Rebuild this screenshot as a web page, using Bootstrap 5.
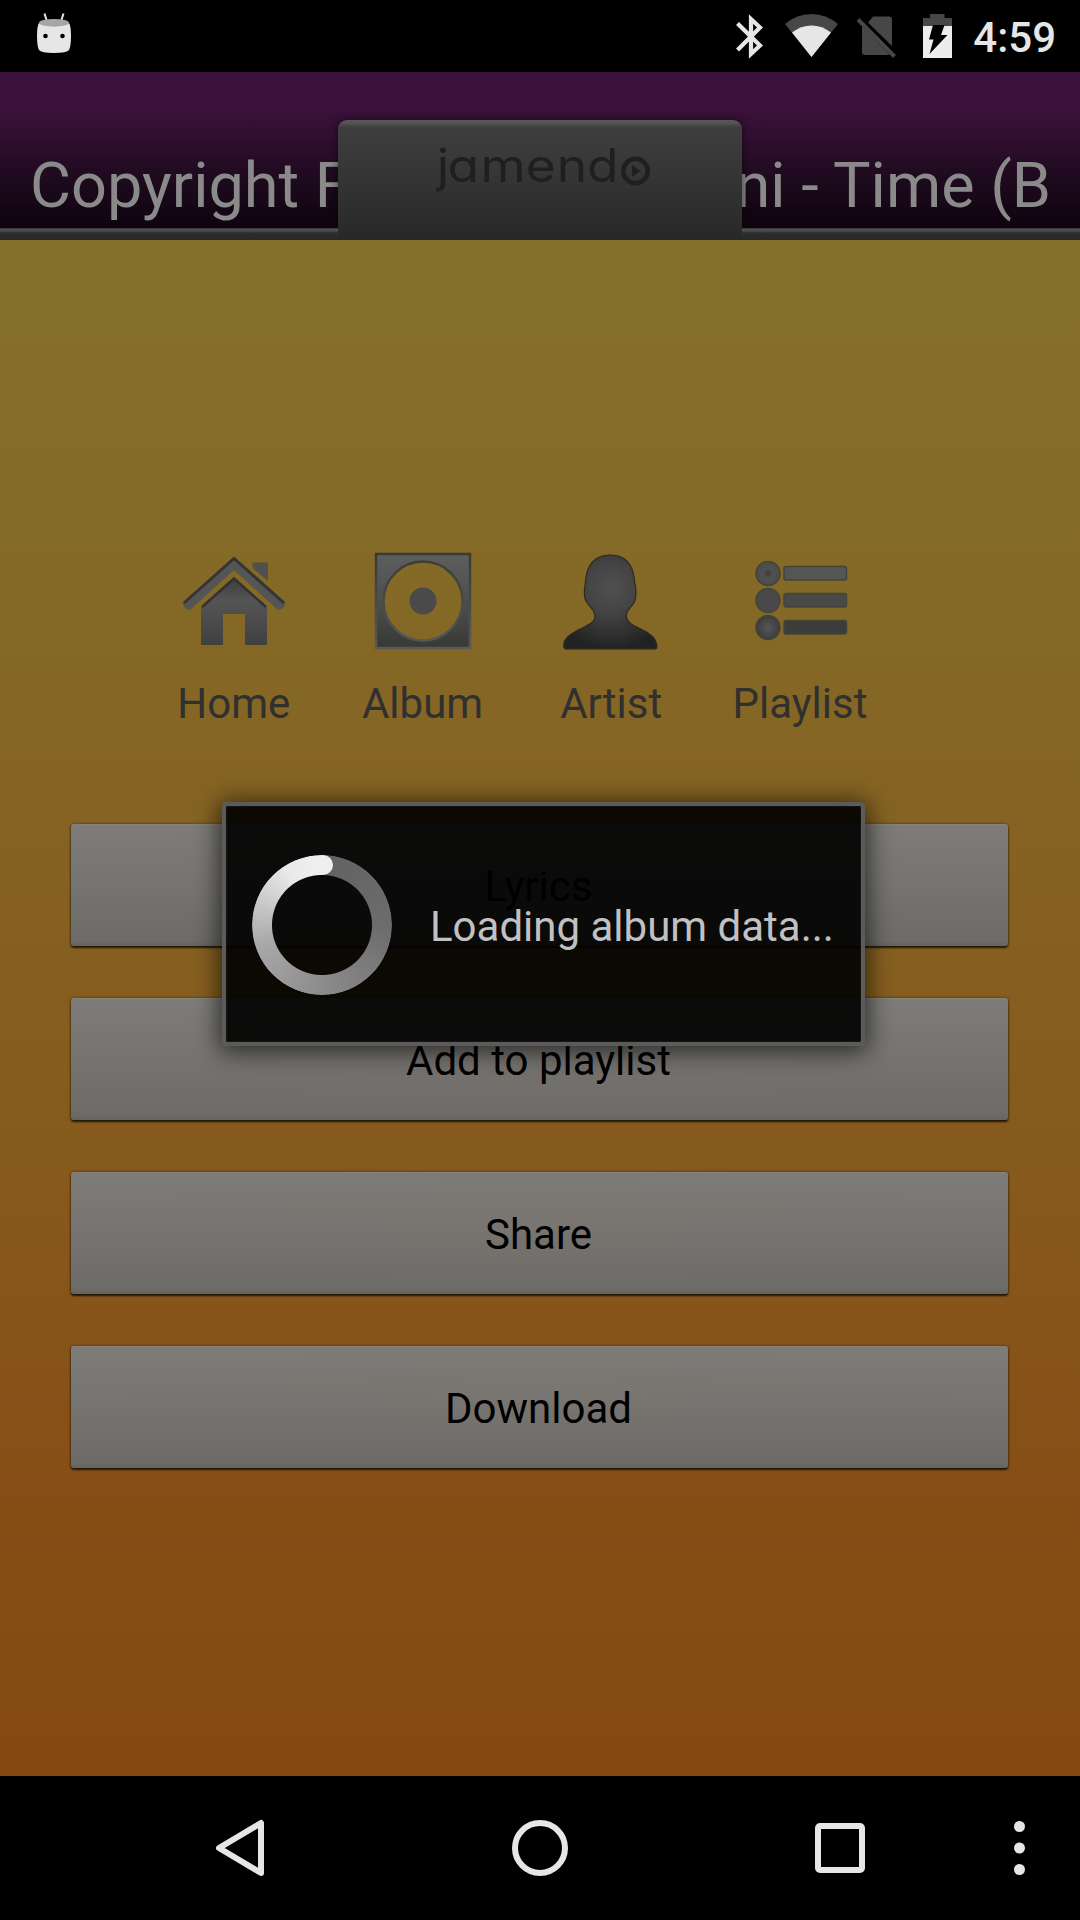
<!DOCTYPE html>
<html lang="en">
<head>
<meta charset="utf-8">
<meta name="viewport" content="width=device-width, initial-scale=1">
<title>jamendo player</title>
<link href="https://cdn.jsdelivr.net/npm/bootstrap@5.3.0/dist/css/bootstrap.min.css" rel="stylesheet">
<style>
body{font-family:Roboto,"Noto Sans",sans-serif;background:#000;color:#000}
svg{display:block;flex:none}
.phone{width:1080px;height:1920px;overflow:hidden}
.statusbar{height:72px;background:#000;padding:0 24px 0 36px}
.clock{font-size:42px;font-weight:500;line-height:48px;color:#e6e6e6;margin:14px 0 0 20px;white-space:nowrap}
.topbar{height:168px;background:linear-gradient(#3a123b 0,#3a123b 38px,#2e0e2e 70px,#1c0a1d 110px,#10030f 156px)}
.title-line{height:156px;padding:77px 29px 0 30px;font-size:63px;line-height:74px;color:#8a8a8a;white-space:pre}
.ledge{height:12px;background:linear-gradient(#222 0,#505050 1px,#4a4a4a 3px,#2c2c2c 5px,#282828 12px)}
.logo-tab{top:48px;left:338px;width:404px;height:120px;border-radius:9px 9px 0 0;background:linear-gradient(#5a5a5a 0,#545454 3px,#3f3f3f 7px,#333 55%,#282828);box-shadow:0 0 8px rgba(0,0,0,.55);clip-path:polygon(-12px -10px,416px -10px,416px 108px,404px 108px,404px 120px,0 120px,0 108px,-12px 108px)}
.logo-word{font-family:Inter,Lato,sans-serif;font-size:46px;font-feature-settings:"cv11" 1}
.stage{height:1536px;background:linear-gradient(#84712c,#856524 33%,#86591c 61%,#864e16 82%,#854910)}
.shortcuts{padding:300px 0 0 140px}
.shortcut{width:188.7px}
.shortcut svg{height:132px;filter:blur(.7px)}
.shortcut span{font-size:42px;line-height:50px;margin:7px 1px 0 0;color:#303030}
.actions{margin:95px 72px 0 71px;gap:52px}
.action{height:122px;border:0;border-radius:3px;padding:3px 2px 0 0;font-size:42px;line-height:50px;color:#000;background:radial-gradient(ellipse at 50% 40%,rgba(130,116,112,.22),rgba(112,116,108,0) 70%),linear-gradient(#7d7c78,#757470 50%,#6c6b67 96%,#646360);box-shadow:inset 0 1px 0 #85827d,0 2px 2px rgba(0,0,0,.7),0 0 3px rgba(0,0,0,.5)}
.loading{left:222px;top:802px;width:643px;height:244px;border:4px solid #5b5b5b;border-radius:5px;background:rgba(0,0,0,.91);background-clip:padding-box;box-shadow:0 3px 24px 3px rgba(0,0,0,.65),inset 0 0 2px #333;padding:2px 0 0 26px}
.ring{width:140px;height:140px}
.ring-arc{width:140px;height:140px;border-radius:50%;background:conic-gradient(#626262,#6c6c6c 25%,#8c8c8c 50%,#a8a8a8 70%,#e9e9e9 91%,#f0f0f0);-webkit-mask:radial-gradient(circle,transparent 49.5px,#000 50.5px);mask:radial-gradient(circle,transparent 49.5px,#000 50.5px)}
.ring-cap{width:20px;height:20px;border-radius:50%;background:#efefef;left:61px;top:0}
.loading-text{font-size:42px;line-height:50px;color:#c1c1c1;margin:3px 0 0 38px;white-space:nowrap}
.navkeys{height:144px;background:#000;padding:0 54px 0 213px}
.key-home{margin-left:245px}
.key-recent{margin-left:245px}
</style>
<script src="https://cdn.jsdelivr.net/npm/bootstrap@5.3.0/dist/js/bootstrap.bundle.min.js"></script>
</head>
<body>
<div class="phone position-relative d-flex flex-column">
  <div class="statusbar d-flex align-items-start">
    <svg width="36" height="60" viewBox="36 0 36 60"><path d="M44.500 13.500l2.500 8M63.500 13.500l-2.500 8" stroke="#e6e6e6" stroke-width="2"/><path d="M39 23Q54 28 69 23Q71 26 71 36Q71 46 69 50Q67 53 54 53Q41 53 39 50Q37 46 37 36Q37 26 39 23Z" fill="#e6e6e6"/><ellipse cx="54" cy="22.800" rx="15" ry="3.900" fill="#a6a6a6"/><circle cx="45.500" cy="36" r="2.300"/><circle cx="62.500" cy="36" r="2.300"/></svg>
    <svg class="ms-auto" width="218" height="60" viewBox="735 0 218 60">
      <path d="M737.500 23.500L760 45.500L751 54V19L760 27.500L737.500 50" fill="none" stroke="#e6e6e6" stroke-width="4.200"/>
      <path d="M785 24Q797 14 811.500 14T838 24L811.500 57Z" fill="#474747"/><path d="M792 32.500Q801 25.500 811.500 25.500T831 32.500L811.500 57Z" fill="#e6e6e6"/>
      <path d="M873 16.500h16q3 0 3 3V46L868 22.500ZM862 26L889.500 54.500Q888 55 886 55H865q-3 0-3-3Z" fill="#474747"/><path d="M858 19.500L894.500 56.500" stroke="#474747" stroke-width="4"/>
      <path d="M930 14h14.500v4H952V26H923V18h7Z" fill="#474747"/><path d="M923 26H952V58H923Z" fill="#ececec"/><path d="M933 25H944.500L941 35H947.500L929.500 54L933.500 39.500H929Z" fill="#000"/>
    </svg>
    <div class="clock">4:59</div>
  </div>

  <header class="topbar position-relative">
    <div class="title-line d-flex justify-content-between"><span>Copyright F</span><span>ni - Time (B</span></div>
    <div class="ledge"></div>
    <div class="logo-tab position-absolute">
      <svg width="404" height="120" viewBox="338 120 404 120"><text class="logo-word" transform="scale(1.12 1)" y="182.500" x="390 399.500 429 469.500 497 524" fill="#1f1f1f">jamend</text><circle cx="635.500" cy="171" r="12.200" fill="none" stroke="#1f1f1f" stroke-width="4.500"/><path d="M632 165L640.500 171L632 177Z" fill="#1f1f1f"/></svg>
    </div>
  </header>

  <main class="stage">
    <nav class="shortcuts d-flex">
      <div class="shortcut d-flex flex-column align-items-center">
        <svg width="120" viewBox="174 540 120 132">
          <defs><linearGradient id="gh" x1="0" y1="0" x2="0" y2="1"><stop offset="0" stop-color="#3c3c3c"/><stop offset=".35" stop-color="#555"/><stop offset="1" stop-color="#404040"/></linearGradient></defs>
          <path d="M252.500 562.500H268V581L252.500 568Z" fill="#505050"/>
          <path d="M234 557L285 602Q286 608 278 610L234 570L190 610Q182 608 183 602Z" fill="#555"/><path d="M184 603L234 558.500L284 603" fill="none" stroke="#353535" stroke-width="3"/>
          <path d="M234 577L267 607V645H245V614H223V645H201V607Z" fill="url(#gh)"/><path d="M202 607L234 578.500L266 607" fill="none" stroke="#333" stroke-width="2.500"/>
        </svg><span>Home</span>
      </div>
      <div class="shortcut d-flex flex-column align-items-center">
        <svg width="120" viewBox="363 540 120 132">
          <defs><linearGradient id="ga" x1="0" y1="0" x2="0" y2="1"><stop offset="0" stop-color="#5e5e5e"/><stop offset=".6" stop-color="#4a4b49"/><stop offset="1" stop-color="#363936"/></linearGradient><linearGradient id="gs" x1="0" y1="0" x2="0" y2="1"><stop offset="0" stop-color="#393b34"/><stop offset="1" stop-color="#595957"/></linearGradient></defs>
          <path d="M376 554H470V648H376ZM462.500 601a39.500 39.500 0 1 0-79 0a39.500 39.500 0 1 0 79 0Z" fill="url(#ga)" fill-rule="evenodd" stroke="url(#gs)" stroke-width="2.500"/><circle cx="423" cy="601" r="13.500" fill="#4a4a4a"/>
        </svg><span>Album</span>
      </div>
      <div class="shortcut d-flex flex-column align-items-center">
        <svg width="120" viewBox="551.500 540 120 132">
          <defs><radialGradient id="gp" gradientUnits="userSpaceOnUse" cx="610" cy="588" r="62"><stop offset="0" stop-color="#505050"/><stop offset=".4" stop-color="#444"/><stop offset="1" stop-color="#222"/></radialGradient></defs>
          <path d="M610 555C625 555 633 564 634 582C636 587 636 597 634 602C631 607 628 608 626 614C625 619 628 623 634 626C642 630 652 634 655 641Q658 648 655 649H565Q562 648 564 641C567 635 577 630 584 627C592 623 596 620 594 614C593 608 589 607 586 602C583 597 584 587 585 582C586 564 594 555 610 555Z" fill="url(#gp)" stroke="#2b2a22" stroke-width="1.200"/>
        </svg><span>Artist</span>
      </div>
      <div class="shortcut d-flex flex-column align-items-center">
        <svg width="120" viewBox="740 540 120 132">
          <defs><radialGradient id="g1"><stop offset="0" stop-color="#3b3b3b"/><stop offset=".4" stop-color="#505050"/><stop offset="1" stop-color="#4b4b4b"/></radialGradient><radialGradient id="g3"><stop offset="0" stop-color="#565656"/><stop offset="1" stop-color="#3b3d3b"/></radialGradient></defs>
          <g stroke="#45443a" stroke-width="1.500"><circle cx="768" cy="573.500" r="12" fill="url(#g1)"/><circle cx="768" cy="600.500" r="12" fill="#494949"/><circle cx="768" cy="627.500" r="12" fill="url(#g3)"/>
          <rect x="784" y="566.500" width="62.500" height="13.500" rx="2" fill="#555"/><rect x="784" y="593.500" width="62.500" height="13.500" rx="2" fill="#494949"/><rect x="784" y="620.500" width="62.500" height="13.500" rx="2" fill="#3b3d3b"/></g>
        </svg><span>Playlist</span>
      </div>
    </nav>
    <div class="actions d-grid">
      <button class="action" type="button">Lyrics</button>
      <button class="action" type="button">Add to playlist</button>
      <button class="action" type="button">Share</button>
      <button class="action" type="button">Download</button>
    </div>
  </main>

  <div class="loading position-absolute d-flex align-items-center" role="status">
    <div class="ring position-relative"><div class="ring-arc"></div><div class="ring-cap position-absolute"></div></div>
    <div class="loading-text">Loading album data...</div>
  </div>

  <footer class="navkeys d-flex align-items-center">
    <svg width="54" height="64" viewBox="213 1816 54 64"><path d="M261 1823V1873L219 1848Z" fill="none" stroke="#e6e6e6" stroke-width="6" stroke-linejoin="round"/></svg>
    <svg class="key-home" width="56" height="56" viewBox="0 0 56 56"><circle cx="28" cy="28" r="25" fill="none" stroke="#e6e6e6" stroke-width="6"/></svg>
    <svg class="key-recent" width="54" height="50" viewBox="-2 0 54 50"><rect x="3" y="3" width="44" height="44" rx="2" fill="none" stroke="#e6e6e6" stroke-width="6"/></svg>
    <svg class="ms-auto" width="13" height="60" viewBox="0 0 13 60"><g fill="#e6e6e6"><circle cx="6.500" cy="8.500" r="5.500"/><circle cx="6.500" cy="30" r="5.500"/><circle cx="6.500" cy="51.500" r="5.500"/></g></svg>
  </footer>
</div>
</body>
</html>
